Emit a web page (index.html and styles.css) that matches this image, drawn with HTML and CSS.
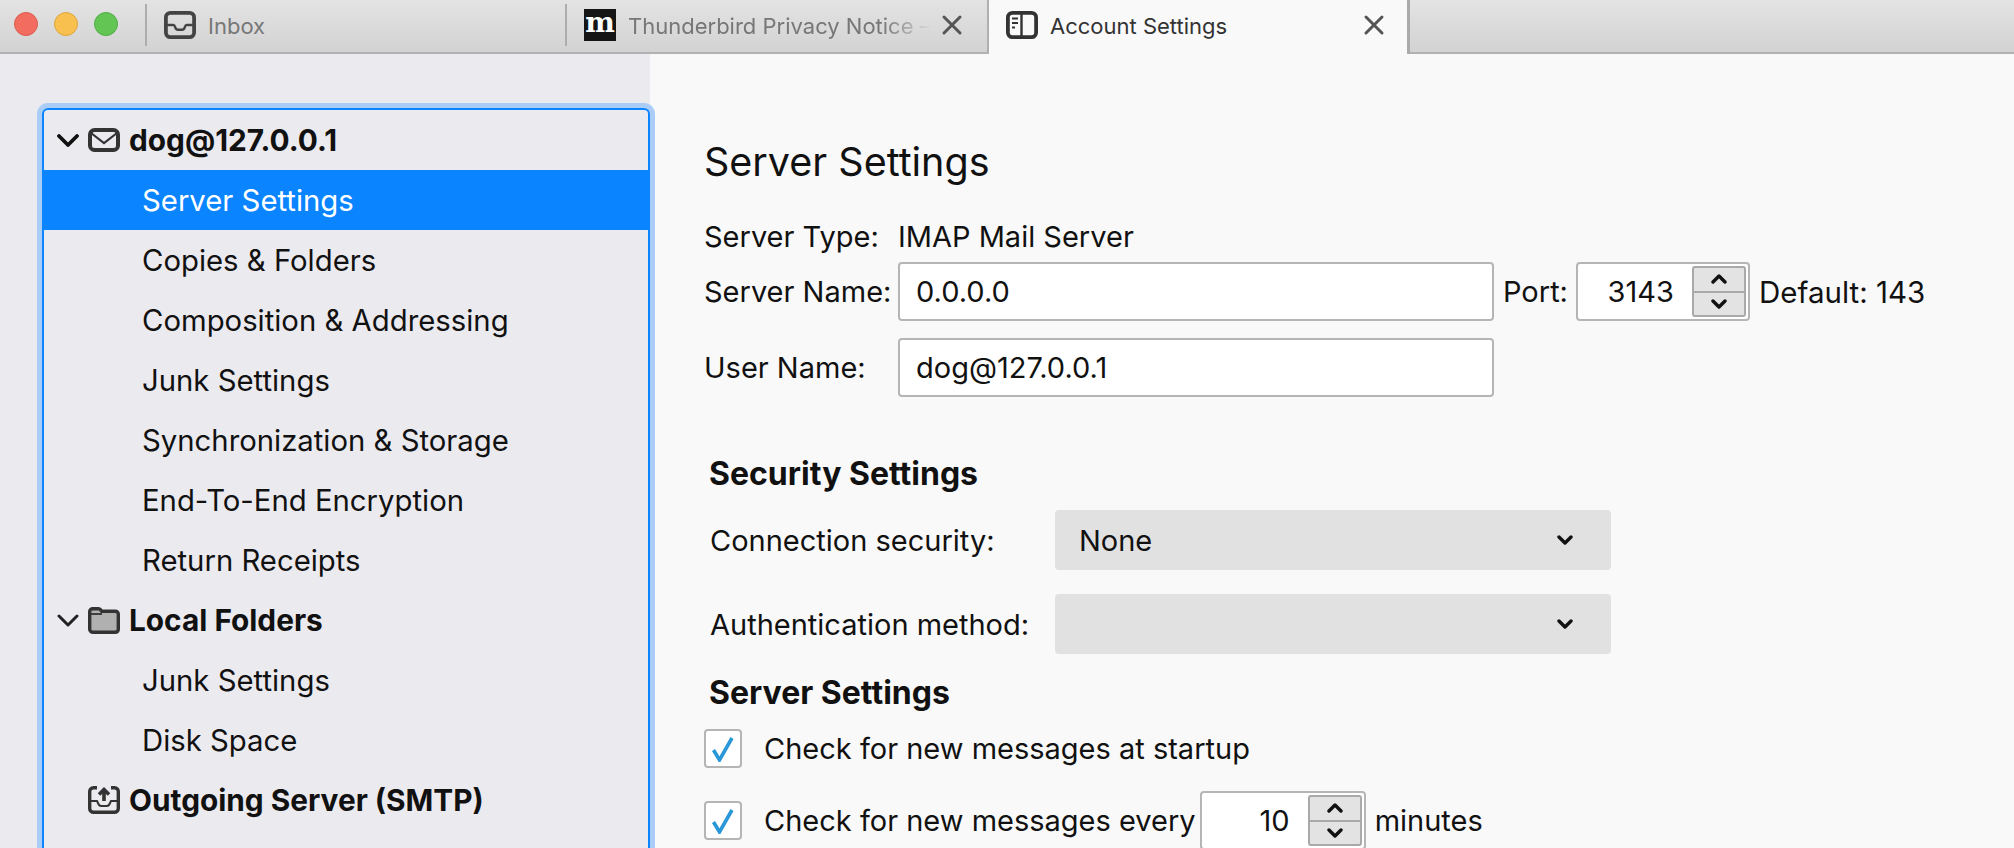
FILE: index.html
```html
<!DOCTYPE html>
<html lang="en">
<head>
  <meta charset="UTF-8">
  <title>Account Settings</title>
  <link rel="stylesheet" href="styles.css">
</head>
<body>

  <div class="tabbar">
    <div class="lights">
      <span class="light red"></span>
      <span class="light yellow"></span>
      <span class="light green"></span>
    </div>
    <span class="tab-sep"></span>
    <div class="tab first-tab">
      <svg class="tab-icon" width="32" height="28" viewBox="0 0 32 28" fill="none" stroke="#444" stroke-width="3.8"><rect x="1.900" y="1.900" width="28.200" height="24.200" rx="4.500"/><path d="M2 14h7.500c1 0 1.200 .8 1.500 1.800 .5 2 1.600 3 3 3h4c1.400 0 2.500-1 3-3 .3-1 .5-1.800 1.500-1.800H30" stroke-width="2.400"/></svg>
      <span class="tab-title">Inbox</span>
    </div>
    <span class="tab-sep"></span>
    <div class="tab second-tab">
      <span class="site-icon">m</span>
      <span class="tab-title fade">Thunderbird Privacy Notice –</span>
      <svg class="tab-close" width="22" height="22" viewBox="0 0 22 22" stroke="#555" stroke-width="3" stroke-linecap="round"><path d="M3 3l16 16M19 3L3 19"/></svg>
    </div>
    <div class="tab active">
      <svg class="tab-icon" width="32" height="28" viewBox="0 0 32 28" fill="none" stroke="#333"><rect x="1.900" y="1.900" width="28.200" height="24.200" rx="4.500" stroke-width="3.800"/><path d="M15.500 2v24" stroke-width="2.400"/><path d="M6 7.500h6M6 12h6M6 16.500h3" stroke-width="2.200"/></svg>
      <span class="tab-title">Account Settings</span>
      <svg class="tab-close" width="22" height="22" viewBox="0 0 22 22" stroke="#555" stroke-width="3" stroke-linecap="round"><path d="M3 3l16 16M19 3L3 19"/></svg>
    </div>
  </div>

  <div class="main">
    <div class="sidebar">
      <div class="tree">
        <div class="row account">
          <svg class="twisty" width="22" height="13" viewBox="0 0 22 13" fill="none" stroke="#111" stroke-width="3.800" stroke-linecap="round" stroke-linejoin="round"><path d="M2 2l9 9 9-9"/></svg>
          <svg class="acct-icon" width="32" height="24" viewBox="0 0 32 24" fill="none" stroke="#333"><rect x="2" y="2" width="28" height="20" rx="4.500" stroke-width="4"/><path d="M3 5l13 10L29 5" stroke-width="2.200"/></svg>
          dog@127.0.0.1
        </div>
        <div class="row child selected">Server Settings</div>
        <div class="row child">Copies &amp; Folders</div>
        <div class="row child">Composition &amp; Addressing</div>
        <div class="row child">Junk Settings</div>
        <div class="row child">Synchronization &amp; Storage</div>
        <div class="row child">End-To-End Encryption</div>
        <div class="row child">Return Receipts</div>
        <div class="row account">
          <svg class="twisty" width="22" height="13" viewBox="0 0 22 13" fill="none" stroke="#222" stroke-width="3" stroke-linecap="round" stroke-linejoin="round"><path d="M2 2l9 9 9-9"/></svg>
          <svg class="acct-icon" width="32" height="27" viewBox="0 0 32 27" stroke="#333" stroke-width="3.400"><path d="M1.700 4.500c0-1.700 1.300-2.800 3-2.800h6c1.500 0 2 1 3 2.500h13.600c1.700 0 3 1.300 3 3v15c0 2-1.500 3.100-3.500 3.100h-21.600c-2 0-3.500-1.100-3.500-3.100z" fill="#b0b0b0"/><path d="M2 7h12" stroke-width="1.800"/></svg>
          Local Folders
        </div>
        <div class="row child">Junk Settings</div>
        <div class="row child">Disk Space</div>
        <div class="row account">
          <span class="twisty-gap"></span>
          <svg class="acct-icon" width="32" height="28" viewBox="0 0 32 28" fill="none" stroke="#333" stroke-width="3.400"><path d="M9 1.700H5.500c-2 0-3.800 1.500-3.800 3.800v17c0 2.300 1.800 3.800 3.800 3.800h21c2 0 3.800-1.500 3.800-3.800v-17c0-2.300-1.800-3.800-3.800-3.800H23"/><path d="M2 15h7c1 1 1 5 4 5h6c3 0 3-4 4-5h7" stroke-width="2"/><path d="M16 15V4M11 8.500l5-5 5 5" stroke-width="3.600"/></svg>
          Outgoing Server (SMTP)
        </div>
      </div>
    </div>

    <div class="content">
      <h1 class="page-title">Server Settings</h1>

      <div class="form-row type-row">
        <span class="label">Server Type:</span>
        <span>IMAP Mail Server</span>
      </div>

      <div class="form-row name-row">
        <span class="label">Server Name:</span>
        <div class="field wide">0.0.0.0</div>
        <span class="port-label">Port:</span>
        <div class="field spin port">
          <span class="spin-value">3143</span>
          <div class="spinner">
            <button class="spin-btn"><svg width="16" height="10" viewBox="0 0 16 10" fill="none" stroke="#111" stroke-width="3.400" stroke-linecap="round" stroke-linejoin="round"><path d="M2 8l6-6 6 6"/></svg></button>
            <button class="spin-btn"><svg width="16" height="10" viewBox="0 0 16 10" fill="none" stroke="#111" stroke-width="3.400" stroke-linecap="round" stroke-linejoin="round"><path d="M2 2l6 6 6-6"/></svg></button>
          </div>
        </div>
        <span class="port-default">Default: 143</span>
      </div>

      <div class="form-row user-row">
        <span class="label">User Name:</span>
        <div class="field wide">dog@127.0.0.1</div>
      </div>

      <h2 class="group-title security-title">Security Settings</h2>

      <div class="form-row select-row first">
        <span class="select-label">Connection security:</span>
        <div class="select">
          <span>None</span>
          <svg width="16" height="10" viewBox="0 0 16 10" fill="none" stroke="#111" stroke-width="3.400" stroke-linecap="round" stroke-linejoin="round"><path d="M2 2l6 6 6-6"/></svg>
        </div>
      </div>
      <div class="form-row select-row">
        <span class="select-label">Authentication method:</span>
        <div class="select">
          <span></span>
          <svg width="16" height="10" viewBox="0 0 16 10" fill="none" stroke="#111" stroke-width="3.400" stroke-linecap="round" stroke-linejoin="round"><path d="M2 2l6 6 6-6"/></svg>
        </div>
      </div>

      <h2 class="group-title server-title">Server Settings</h2>

      <div class="form-row check-row">
        <span class="checkbox"><svg width="24" height="26" viewBox="0 0 24 26" fill="none" stroke="#2a97d8" stroke-width="3.600"><path d="M2.500 14l6 10L21 2"/></svg></span>
        <span>Check for new messages at startup</span>
      </div>
      <div class="form-row check-row every">
        <span class="checkbox"><svg width="24" height="26" viewBox="0 0 24 26" fill="none" stroke="#2a97d8" stroke-width="3.600"><path d="M2.500 14l6 10L21 2"/></svg></span>
        <span>Check for new messages every</span>
        <div class="field spin minutes">
          <span class="spin-value">10</span>
          <div class="spinner">
            <button class="spin-btn"><svg width="16" height="10" viewBox="0 0 16 10" fill="none" stroke="#111" stroke-width="3.400" stroke-linecap="round" stroke-linejoin="round"><path d="M2 8l6-6 6 6"/></svg></button>
            <button class="spin-btn"><svg width="16" height="10" viewBox="0 0 16 10" fill="none" stroke="#111" stroke-width="3.400" stroke-linecap="round" stroke-linejoin="round"><path d="M2 2l6 6 6-6"/></svg></button>
          </div>
        </div>
        <span class="minutes-label">minutes</span>
      </div>
    </div>
  </div>

</body>
</html>
```

FILE: styles.css
```css
* {
  box-sizing: border-box;
}
body {
  margin: 0;
  height: 848px;
  overflow: hidden;
  background: #f9f9f9;
  color: #111;
  font-family: Inter, "Liberation Sans", sans-serif;
  font-size: 29px;
}

/* tab bar */
.tabbar {
  display: flex;
  height: 54px;
  background: linear-gradient(to bottom, #e3e3e3, #d2d2d2);
  box-shadow: inset 0 -2px #b2b2b2;
}
.lights {
  display: flex;
  gap: 16px;
  flex: none;
  width: 145px;
  padding: 12px 0 0 14px;
}
.light {
  width: 24px;
  height: 24px;
  border-radius: 50%;
}
.red { background: #f26d60; border: 1px solid #dc5a4e; }
.yellow { background: #f7c04f; border: 1px solid #dca63c; }
.green { background: #62c554; border: 1px solid #51ac45; }
.tab-sep {
  flex: none;
  width: 2px;
  height: 42px;
  margin-top: 4px;
  background: #adadad;
}
.tab {
  display: flex;
  align-items: center;
  flex: none;
  height: 54px;
  padding: 0 0 4px 17px;
  color: #777;
  font-size: 22px;
}
.first-tab {
  width: 418px;
}
.second-tab {
  width: 420px;
}
.tab.active {
  width: 423px;
  background: #f9f9f9;
  border-left: 2px solid #b0b0b0;
  border-right: 3px solid #aaa;
  color: #333;
}
.tab-icon {
  flex: none;
  margin-right: 12px;
}
.tab-title {
  flex: 1;
  min-width: 0;
  padding-top: 1px;
  white-space: nowrap;
}
.fade {
  -webkit-mask-image: linear-gradient(to right, #000 82%, transparent 98%);
  mask-image: linear-gradient(to right, #000 82%, transparent 98%);
}
.site-icon {
  flex: none;
  width: 32px;
  height: 32px;
  margin-right: 12px;
  background: #151515;
  color: #fff;
  font-family: "DejaVu Serif", serif;
  font-weight: bold;
  font-size: 28px;
  line-height: 27px;
  text-align: center;
}
.tab-close {
  flex: none;
  margin: 0 24px 0 4px;
}
.active .tab-close {
  margin-right: 22px;
}

/* sidebar */
.main {
  display: flex;
  height: 794px;
  overflow: hidden;
}
.sidebar {
  flex: none;
  width: 650px;
  padding: 54px 0 0 42px;
  background: #ebeaef;
}
.tree {
  width: 608px;
  height: 740px;
  border: 2px solid #0a84ff;
  border-bottom: none;
  border-radius: 6px 6px 0 0;
  box-shadow: 0 0 0 5px #a9cdf7;
}
.row {
  display: flex;
  align-items: center;
  height: 60px;
  white-space: nowrap;
  font-size: 29.3px;
}
.account {
  padding-left: 13px;
  font-size: 29.8px;
  font-weight: 700;
}
.child {
  padding-left: 98px;
}
.selected {
  background: #0a84ff;
  color: #fff;
}
.twisty {
  flex: none;
  margin-right: 9px;
}
.twisty-gap {
  flex: none;
  width: 31px;
}
.acct-icon {
  flex: none;
  margin-right: 9px;
}

/* right pane */
.content {
  flex: 1;
  padding: 78px 0 0 54px;
}
.page-title {
  height: 60px;
  margin: 0;
  font-size: 39.5px;
  font-weight: 400;
  line-height: 60px;
}
.form-row {
  display: flex;
  align-items: center;
}
.type-row {
  height: 40px;
  margin-top: 24px;
}
.label {
  flex: none;
  width: 194px;
}
.name-row {
  height: 59px;
  margin-top: 6px;
}
.user-row {
  height: 59px;
  margin-top: 17px;
}
.field {
  display: flex;
  align-items: center;
  flex: none;
  height: 59px;
  background: #fff;
  border: 2px solid #b5b5b5;
  border-radius: 4px;
}
.wide {
  width: 596px;
  padding-left: 16px;
}
.port-label {
  margin: 0 8px 0 9px;
}
.spin {
  justify-content: space-between;
  padding-right: 2px;
}
.port {
  width: 174px;
}
.minutes {
  width: 166px;
  margin-left: 4px;
}
.spin-value {
  flex: 1;
  padding-right: 18px;
  text-align: right;
}
.spinner {
  display: flex;
  flex-direction: column;
  flex: none;
  width: 54px;
  height: 51px;
  background: #e3e3e3;
  border: 2px solid #a9a9a9;
  border-radius: 3px;
}
.spin-btn {
  display: flex;
  flex: 1;
  align-items: center;
  justify-content: center;
  padding: 0;
  background: none;
  border: none;
}
.spin-btn + .spin-btn {
  border-top: 2px solid #a9a9a9;
}
.port-default {
  margin-left: 9px;
  font-size: 29.5px;
}
.group-title {
  height: 40px;
  margin: 0 0 0 5px;
  font-size: 32px;
  font-weight: 700;
  line-height: 40px;
}
.security-title {
  margin-top: 57px;
}
.select-row {
  height: 60px;
  margin: 24px 0 0 6px;
}
.select-row.first {
  margin-top: 16px;
}
.select-label {
  flex: none;
  width: 345px;
}
.select {
  display: flex;
  align-items: center;
  justify-content: space-between;
  width: 556px;
  height: 60px;
  padding: 0 38px 0 24px;
  background: #e1e1e1;
  border-radius: 4px;
}
.group-title.server-title {
  margin-top: 19px;
}
.check-row {
  height: 39px;
  margin-top: 16px;
}
.check-row.every {
  height: 59px;
  margin-top: 23px;
}
.checkbox {
  display: flex;
  align-items: center;
  justify-content: center;
  flex: none;
  width: 38px;
  height: 39px;
  margin-right: 22px;
  background: #fff;
  border: 2px solid #b5b5b5;
  border-radius: 4px;
}
.minutes-label {
  margin-left: 9px;
}
```
